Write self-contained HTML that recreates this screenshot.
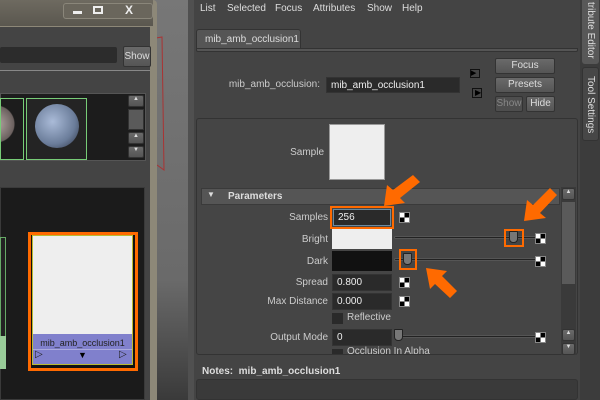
<!DOCTYPE html>
<html><head><style>
*{margin:0;padding:0;box-sizing:border-box}
body{width:600px;height:400px;overflow:hidden;background:#444;font-family:"Liberation Sans",sans-serif;font-size:10px;color:#ddd;position:relative}
.a{position:absolute}
.fld{position:absolute;background:#2a2a2a;border:1px solid #333;color:#eee;padding-left:4px;line-height:15px;font-size:10px}
.lbl{position:absolute;text-align:right;color:#ccc;font-size:10px}
.btn{position:absolute;background:linear-gradient(#6a6a6a,#555);border:1px solid #333;border-radius:2px;color:#ddd;text-align:center;font-size:10px}
.chk{position:absolute;width:11px;height:11px;background:conic-gradient(#000 0 25%,#fff 0 50%,#000 0 75%,#fff 0);border:1px solid #888}
.track{position:absolute;height:3px;background:#222;border:1px solid #555;border-radius:2px}
.thumb{position:absolute;width:9px;height:12px;background:#777;border:1px solid #222;border-radius:1px 1px 4px 4px}
</style></head><body>
<div class="a" style="left:150px;top:0;width:45px;height:400px;background:linear-gradient(#777,#6a6a6a 70%,#3a3a3a)"></div>
<div class="a" style="left:188px;top:0;width:6px;height:400px;background:#505050"></div>
<svg class="a" style="left:155px;top:35px" width="15" height="140"><path d="M1 3 L7 2 L9 135 L2 130" stroke="#a33" fill="none"/></svg>

<div class="a" style="left:0;top:0;width:157px;height:400px;background:#8d8878;border-radius:0 4px 0 0"></div>
<div class="a" style="left:0;top:0;width:153px;height:26px;background:linear-gradient(#6e6a60,#5a574f)"></div>
<div class="a" style="left:63px;top:3px;width:90px;height:16px;border:1px solid #8a867a;border-radius:3px;background:#6a665c"></div>
<div class="a" style="left:73px;top:11px;width:9px;height:3px;background:#eee"></div>
<div class="a" style="left:93px;top:6px;width:10px;height:8px;border:2px solid #eee"></div>
<div class="a" style="left:125px;top:3px;color:#eee;font-size:12px;font-weight:bold">X</div>
<div class="a" style="left:0;top:27px;width:150px;height:373px;background:#444"></div>
<div class="a" style="left:0;top:47px;width:117px;height:16px;background:#2c2c2c;border-radius:2px"></div>
<div class="btn" style="left:123px;top:46px;width:28px;height:21px;line-height:19px">Show</div>
<div class="a" style="left:0;top:70px;width:150px;height:1px;background:#888"></div>
<div class="a" style="left:0;top:93px;width:146px;height:68px;background:#1c1c1c;border:1px solid #555"></div>
<div class="a" style="left:0;top:98px;width:24px;height:62px;border:1px solid #7c7;background:radial-gradient(circle at -5px 25px,#b8aaa6 0,#6a605e 18px,#1c1c1c 19px)"></div>
<div class="a" style="left:26px;top:98px;width:61px;height:62px;border:1px solid #7c7;background:#242424"></div>
<div class="a" style="left:35px;top:104px;width:44px;height:44px;border-radius:50%;background:radial-gradient(circle at 40% 40%,#aabbd8,#6b7d9a 60%,#2a3040)"></div>
<div class="btn" style="left:128px;top:95px;width:16px;height:12px;font-size:6px">▲</div>
<div class="a" style="left:128px;top:109px;width:16px;height:21px;background:#5a5a5a;border:1px solid #333"></div>
<div class="btn" style="left:128px;top:132px;width:16px;height:12px;font-size:6px">▲</div>
<div class="btn" style="left:128px;top:146px;width:16px;height:12px;font-size:6px">▼</div>
<div class="a" style="left:0;top:187px;width:145px;height:213px;background:#1b1b1b;border:1px solid #3a3a3a"></div>
<div class="a" style="left:0;top:237px;width:6px;height:132px;border:1px solid #6a6;background:#222"></div>
<div class="a" style="left:0;top:336px;width:6px;height:33px;background:#9c9"></div>
<div class="a" style="left:28px;top:232px;width:110px;height:139px;border:3px solid #ff6a00;background:#111"></div>
<div class="a" style="left:32px;top:235px;width:101px;height:130px;border:1px solid #bb3;background:#eee"></div>
<div class="a" style="left:33px;top:334px;width:99px;height:30px;background:#8080cc"></div>
<div class="a" style="left:33px;top:338px;width:99px;text-align:center;color:#222;font-size:9px">mib_amb_occlusion1</div>
<div class="a" style="left:33px;top:349px;width:99px;height:1px;background:#aad"></div>
<div class="a" style="left:35px;top:349px;color:#222;font-size:10px">▷</div>
<div class="a" style="left:119px;top:349px;color:#222;font-size:10px">▷</div>
<div class="a" style="left:78px;top:350px;color:#000;font-size:9px">▼</div>

<div class="a" style="left:194px;top:0;width:386px;height:400px;background:#444"></div>
<div class="a" style="left:200px;top:3px">List</div>
<div class="a" style="left:227px;top:3px">Selected</div>
<div class="a" style="left:275px;top:3px">Focus</div>
<div class="a" style="left:313px;top:3px">Attributes</div>
<div class="a" style="left:367px;top:3px">Show</div>
<div class="a" style="left:402px;top:3px">Help</div>
<div class="a" style="left:196px;top:29px;width:105px;height:20px;background:#555;border:1px solid #333;border-bottom:none;border-radius:3px 3px 0 0;padding:4px 0 0 8px;color:#ddd;white-space:nowrap">mib_amb_occlusion1</div>
<div class="a" style="left:196px;top:48px;width:382px;height:4px;background:#555;border:1px solid #333;border-radius:0 0 2px 2px"></div>
<div class="lbl" style="left:210px;top:79px;width:110px">mib_amb_occlusion:</div>
<div class="fld" style="left:326px;top:77px;width:134px;height:16px">mib_amb_occlusion1</div>
<div class="a" style="left:470px;top:69px;width:10px;height:9px;border:1px solid #111;font-size:7px;color:#000;line-height:7px">▶</div>
<div class="a" style="left:472px;top:88px;width:10px;height:10px;border:1px solid #111;font-size:8px;color:#000;line-height:8px;padding-left:2px">▶</div>
<div class="btn" style="left:495px;top:58px;width:60px;height:16px;line-height:14px">Focus</div>
<div class="btn" style="left:495px;top:77px;width:60px;height:16px;line-height:14px">Presets</div>
<div class="btn" style="left:495px;top:96px;width:28px;height:16px;line-height:14px;color:#888;background:#4e4e4e">Show</div>
<div class="btn" style="left:526px;top:96px;width:29px;height:16px;line-height:14px">Hide</div>
<div class="a" style="left:196px;top:118px;width:382px;height:237px;border:1px solid #333;background:#454545;border-radius:3px"></div>
<div class="lbl" style="left:260px;top:147px;width:64px">Sample</div>
<div class="a" style="left:329px;top:124px;width:56px;height:56px;background:#eee;border:1px solid #999"></div>
<div class="a" style="left:201px;top:188px;width:359px;height:17px;background:#555;border:1px solid #3a3a3a"></div>
<div class="a" style="left:207px;top:190px;font-size:8px;color:#ddd">▼</div>
<div class="a" style="left:228px;top:191px;font-weight:bold;color:#ddd">Parameters</div>
<div class="a" style="left:561px;top:187px;width:15px;height:168px;background:#3a3a3a"></div>
<div class="btn" style="left:562px;top:188px;width:13px;height:12px;font-size:6px">▲</div>
<div class="a" style="left:562px;top:202px;width:13px;height:82px;background:#5a5a5a"></div>
<div class="btn" style="left:562px;top:329px;width:13px;height:12px;font-size:6px">▲</div>
<div class="btn" style="left:562px;top:343px;width:13px;height:12px;font-size:6px">▼</div>

<div class="lbl" style="left:230px;top:212px;width:98px">Samples</div>
<div class="a" style="left:330px;top:206px;width:64px;height:23px;border:2px solid #ff6a00"></div>
<div class="fld" style="left:333px;top:209px;width:58px;height:17px;border-color:#6a8aa0;line-height:15px">256</div>
<div class="chk" style="left:399px;top:212px"></div>
<div class="lbl" style="left:230px;top:234px;width:98px">Bright</div>
<div class="a" style="left:332px;top:229px;width:60px;height:20px;background:#eee"></div>
<div class="track" style="left:394px;top:236px;width:144px"></div>
<div class="a" style="left:504px;top:229px;width:20px;height:18px;border:2px solid #ff6a00"></div>
<div class="thumb" style="left:509px;top:231px"></div>
<div class="chk" style="left:535px;top:233px"></div>
<div class="lbl" style="left:230px;top:256px;width:98px">Dark</div>
<div class="a" style="left:332px;top:251px;width:60px;height:20px;background:#111"></div>
<div class="track" style="left:394px;top:258px;width:144px"></div>
<div class="a" style="left:399px;top:249px;width:18px;height:21px;border:2px solid #ff6a00"></div>
<div class="thumb" style="left:403px;top:253px"></div>
<div class="chk" style="left:535px;top:256px"></div>
<div class="lbl" style="left:230px;top:277px;width:98px">Spread</div>
<div class="fld" style="left:332px;top:274px;width:60px;height:17px">0.800</div>
<div class="chk" style="left:399px;top:277px"></div>
<div class="lbl" style="left:230px;top:296px;width:98px">Max Distance</div>
<div class="fld" style="left:332px;top:293px;width:60px;height:17px">0.000</div>
<div class="chk" style="left:399px;top:296px"></div>
<div class="a" style="left:332px;top:313px;width:11px;height:11px;background:#2a2a2a"></div>
<div class="a" style="left:347px;top:312px;color:#ccc">Reflective</div>
<div class="lbl" style="left:230px;top:332px;width:98px">Output Mode</div>
<div class="fld" style="left:332px;top:329px;width:60px;height:17px">0</div>
<div class="track" style="left:394px;top:335px;width:144px"></div>
<div class="thumb" style="left:394px;top:329px"></div>
<div class="chk" style="left:535px;top:332px"></div>
<div class="a" style="left:332px;top:349px;width:11px;height:5px;background:#2a2a2a"></div>
<div class="a" style="left:347px;top:346px;color:#ccc;height:8px;overflow:hidden;line-height:12px">Occlusion In Alpha</div>

<div class="a" style="left:202px;top:366px;font-weight:bold;color:#ddd">Notes:&nbsp; mib_amb_occlusion1</div>
<div class="a" style="left:196px;top:379px;width:382px;height:21px;background:#3a3a3a;border:1px solid #333;border-radius:3px"></div>

<div class="a" style="left:580px;top:0;width:20px;height:400px;background:#3c3c3c"></div>
<div class="a" style="left:582px;top:0;width:17px;height:64px;background:#585858;border-radius:0 0 3px 3px"></div>
<div class="a" style="left:582px;top:67px;width:17px;height:74px;background:#474747;border:1px solid #333;border-radius:3px"></div>
<div class="a" style="left:585px;top:2px;writing-mode:vertical-rl;color:#ddd;font-size:10px">tribute Editor</div>
<div class="a" style="left:585px;top:76px;writing-mode:vertical-rl;color:#ddd;font-size:10px">Tool Settings</div>

<svg class="a" style="left:0;top:0" width="600" height="400">
<g fill="#ff6a00">
<polygon points="413,175 420,182 400,198 405,203 384,206 387,185 393,190"/>
<polygon points="550,188 557,195 540,213 546,218 524,221 527,200 533,205"/>
<polygon points="457,291 450,298 435,284 430,289 426,268 447,271 442,276"/>
</g></svg>
</body></html>
